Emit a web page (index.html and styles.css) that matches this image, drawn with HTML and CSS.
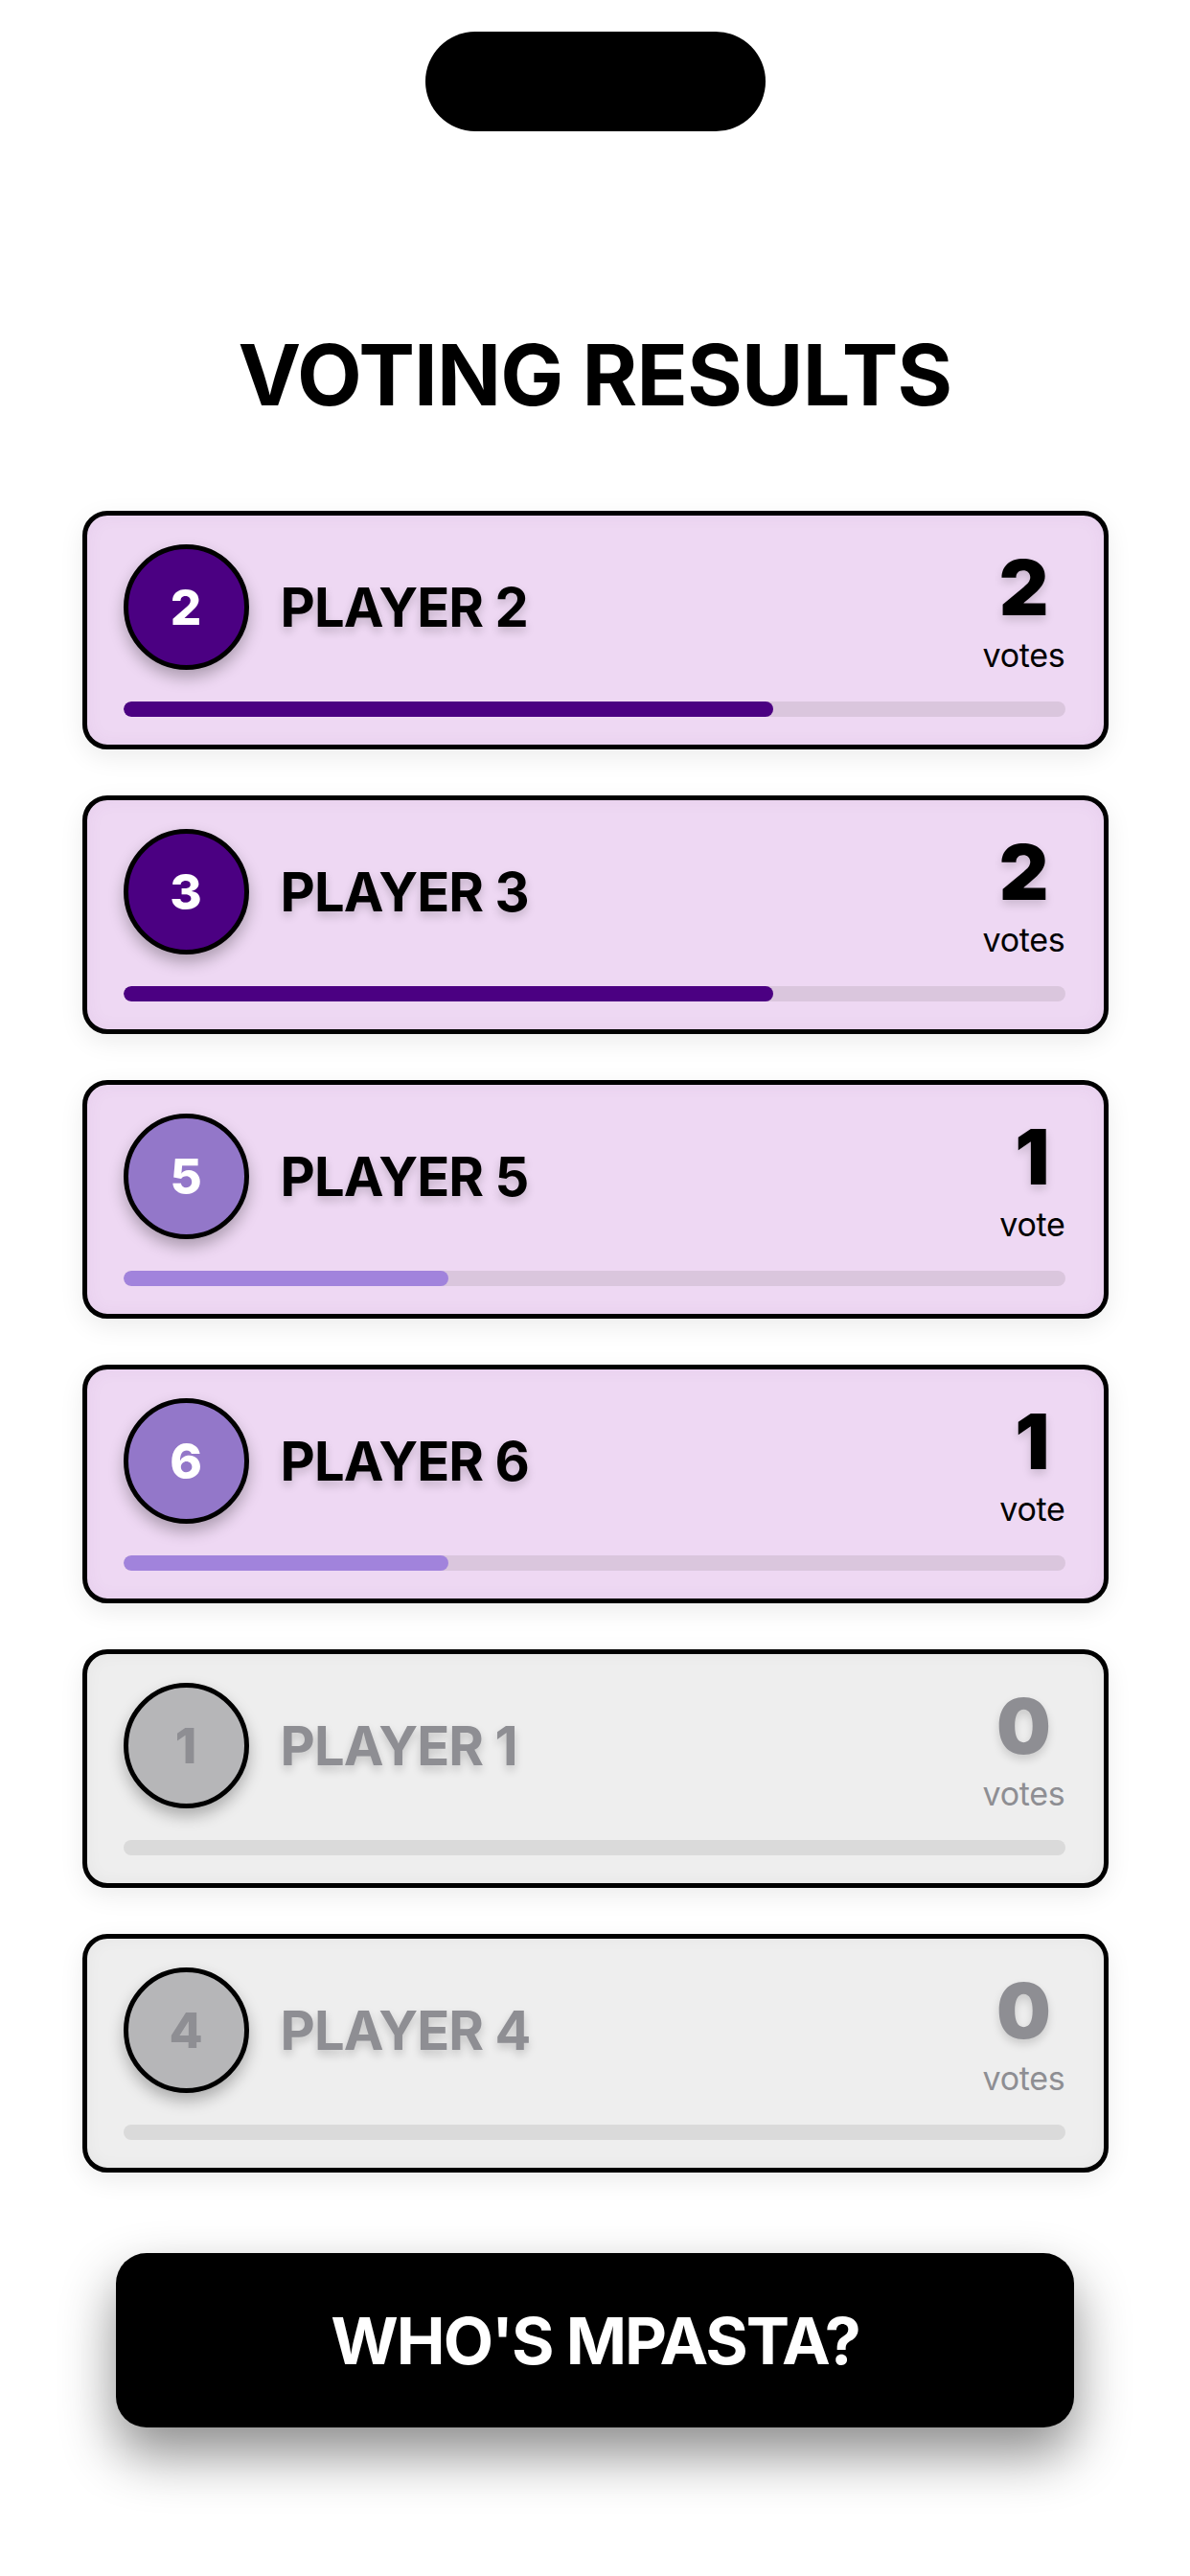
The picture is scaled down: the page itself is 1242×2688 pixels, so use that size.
FILE: index.html
```html
<!DOCTYPE html>
<html lang="en">
<head>
  <meta charset="UTF-8">
  <meta name="viewport" content="width=device-width, initial-scale=1.0">
  <title>Voting Results</title>
  <link rel="stylesheet" href="styles.css">
</head>
<body>
  <div class="screen">
    <div class="notch"></div>

    <h1 class="title">VOTING RESULTS</h1>

    <div class="results">
      <div class="card">
        <div class="card-top">
          <div class="player">
            <div class="badge dark">2</div>
            <span class="name">PLAYER 2</span>
          </div>
          <div class="count">
            <span class="count-num">2</span>
            <span class="count-label">votes</span>
          </div>
        </div>
        <div class="bar"><div class="fill dark" style="width: 69%;"></div></div>
      </div>

      <div class="card">
        <div class="card-top">
          <div class="player">
            <div class="badge dark">3</div>
            <span class="name">PLAYER 3</span>
          </div>
          <div class="count">
            <span class="count-num">2</span>
            <span class="count-label">votes</span>
          </div>
        </div>
        <div class="bar"><div class="fill dark" style="width: 69%;"></div></div>
      </div>

      <div class="card">
        <div class="card-top">
          <div class="player">
            <div class="badge light">5</div>
            <span class="name">PLAYER 5</span>
          </div>
          <div class="count">
            <span class="count-num">1</span>
            <span class="count-label">vote</span>
          </div>
        </div>
        <div class="bar"><div class="fill light" style="width: 34.5%;"></div></div>
      </div>

      <div class="card">
        <div class="card-top">
          <div class="player">
            <div class="badge light">6</div>
            <span class="name">PLAYER 6</span>
          </div>
          <div class="count">
            <span class="count-num">1</span>
            <span class="count-label">vote</span>
          </div>
        </div>
        <div class="bar"><div class="fill light" style="width: 34.5%;"></div></div>
      </div>

      <div class="card empty">
        <div class="card-top">
          <div class="player">
            <div class="badge">1</div>
            <span class="name">PLAYER 1</span>
          </div>
          <div class="count">
            <span class="count-num">0</span>
            <span class="count-label">votes</span>
          </div>
        </div>
        <div class="bar"></div>
      </div>

      <div class="card empty">
        <div class="card-top">
          <div class="player">
            <div class="badge">4</div>
            <span class="name">PLAYER 4</span>
          </div>
          <div class="count">
            <span class="count-num">0</span>
            <span class="count-label">votes</span>
          </div>
        </div>
        <div class="bar"></div>
      </div>
    </div>

    <button class="reveal">WHO'S MPASTA?</button>
  </div>
</body>
</html>
```

FILE: styles.css
```css
body {
  margin: 0;
  background: #ffffff;
  font-family: Inter, "Noto Sans", sans-serif;
  color: #000000;
}

.screen {
  width: 1242px;
  min-height: 2688px;
  display: flex;
  flex-direction: column;
  align-items: center;
}

.notch {
  margin-top: 33px;
  width: 355px;
  height: 104px;
  border-radius: 52px;
  background: #000000;
}

.title {
  margin: 210px 0 0;
  font-size: 88px;
  line-height: 1;
  font-weight: 700;
  letter-spacing: -0.8px;
}

.results {
  margin-top: 98px;
  display: flex;
  flex-direction: column;
  gap: 48px;
}

.card {
  width: 1071px;
  box-sizing: border-box;
  border: 5px solid #000000;
  border-radius: 26px;
  background: #eed8f3;
  padding: 30px 40px 29px 38px;
  box-shadow: 0 8px 26px rgba(0, 0, 0, 0.08), inset 0 0 18px rgba(120, 60, 140, 0.06);
}

.card.empty {
  background: #eeeeee;
  box-shadow: 0 8px 26px rgba(0, 0, 0, 0.08), inset 0 0 18px rgba(0, 0, 0, 0.04);
}

.card-top {
  display: flex;
  justify-content: space-between;
  align-items: flex-start;
  height: 140px;
}

.player {
  display: flex;
  align-items: center;
  gap: 33px;
}

.badge {
  width: 131px;
  height: 131px;
  box-sizing: border-box;
  border: 5px solid #000000;
  border-radius: 50%;
  background: #b6b6b8;
  color: #8e8e93;
  display: flex;
  align-items: center;
  justify-content: center;
  font-size: 51px;
  font-weight: 800;
  box-shadow: 0 8px 16px rgba(0, 0, 0, 0.28);
}

.badge.dark {
  background: #4b0082;
  color: #ffffff;
}

.badge.light {
  background: #9377c9;
  color: #ffffff;
}

.name {
  font-size: 56px;
  font-weight: 700;
  letter-spacing: -0.9px;
  text-shadow: 0 5px 10px rgba(0, 0, 0, 0.18);
}

.count {
  margin-top: 5px;
  display: flex;
  flex-direction: column;
  align-items: center;
}

.count-num {
  font-size: 80px;
  line-height: 1;
  font-weight: 900;
  text-shadow: 0 5px 10px rgba(0, 0, 0, 0.15);
}

.count-label {
  margin-top: 14px;
  font-size: 34px;
  line-height: 1;
  letter-spacing: -0.3px;
}

.empty .name,
.empty .count-num,
.empty .count-label {
  color: #8e8e93;
}

.bar {
  margin-top: 24px;
  height: 16px;
  border-radius: 8px;
  background: #dac6dd;
  overflow: hidden;
}

.empty .bar {
  background: #dadada;
}

.fill {
  height: 100%;
  border-radius: 8px;
}

.fill.dark {
  background: #4b0082;
}

.fill.light {
  background: #a183dc;
}

.reveal {
  margin-top: 84px;
  width: 1000px;
  height: 182px;
  border: none;
  border-radius: 32px;
  background: #000000;
  color: #ffffff;
  font-family: Inter, "Noto Sans", sans-serif;
  font-size: 68px;
  font-weight: 700;
  letter-spacing: -2px;
  box-shadow: 0 28px 56px rgba(0, 0, 0, 0.45);
}
```
